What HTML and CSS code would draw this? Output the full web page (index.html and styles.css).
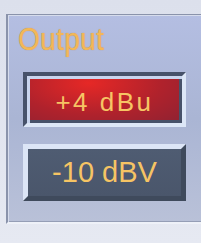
FILE: index.html
```html
<!DOCTYPE html>
<html lang="en">
<head>
    <meta charset="UTF-8">
    <title>Output</title>
    <link rel="stylesheet" href="styles.css">
</head>
<body>
    <div class="panel">
        <div class="panel-title">Output</div>
        <div class="level-list">
            <div class="level-btn active">+4 dBu</div>
            <div class="level-btn">-10 dBV</div>
        </div>
    </div>
</body>
</html>
```
FILE: styles.css
```css
body {
    margin: 0;
    width: 201px;
    height: 243px;
    overflow: hidden;
    background: linear-gradient(#dce0ec, #e6e9f2);
    font-family: 'Liberation Sans', Arial, sans-serif;
}

.panel {
    box-sizing: border-box;
    margin: 14px 0 0 6px;
    width: 195px;
    height: 210px;
    padding: 7px 0 0 10px;
    border-top: 1px solid #8a93ab;
    border-left: 2px solid #8a93ab;
    border-bottom: 2px solid #eef1f8;
    background: linear-gradient(#b4bee2, #aab5d4 50%, #b9c1d8);
    box-shadow: inset 1px 1px 0 #d6dcec, inset 0 -1px 0 #959eb6;
}

.panel-title {
    font-size: 32px;
    line-height: 34px;
    letter-spacing: 0.5px;
    color: #f2b858;
    text-shadow: 0 0 1px #c4863a;
    transform: scaleX(0.87);
    transform-origin: left center;
    margin-bottom: 16px;
}

.level-list {
    display: flex;
    flex-direction: column;
    gap: 17px;
    margin-left: 5px;
}

.level-btn {
    box-sizing: border-box;
    width: 163px;
    height: 57px;
    display: flex;
    align-items: center;
    justify-content: center;
    font-size: 29px;
    color: #f6c464;
    border: 5px solid;
    border-color: #dce5f6 #3f4a5c #3f4a5c #dce5f6;
    background: linear-gradient(#4f5c72, #4a566b);
}

.level-btn.active {
    height: 55px;
    padding-top: 6px;
    font-size: 26px;
    letter-spacing: 2.5px;
    border-width: 4px;
    border-color: #47526a #dde7f7 #dde7f7 #47526a;
    background: radial-gradient(ellipse at 40% 15%, #e62826, #b0222c 55%, #8e2232);
    box-shadow: inset 3px 3px 0 #c9d5ee, inset -3px -3px 0 #47526a;
}
```
